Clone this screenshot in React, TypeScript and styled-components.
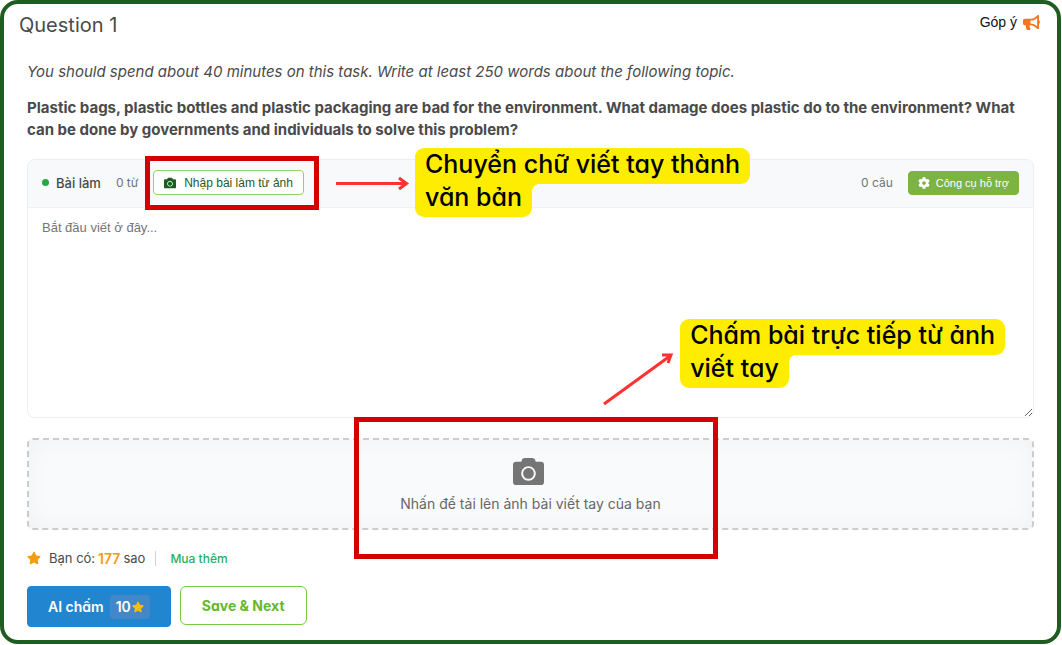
import React from "react";
import styled, { createGlobalStyle } from "styled-components";
import { FaBullhorn, FaCamera, FaCog, FaStar } from "react-icons/fa";

const GlobalStyle = createGlobalStyle`
  *, *::before, *::after { box-sizing: border-box; }
  body { margin: 0; background: #fff; font-family: Inter, "Liberation Sans", sans-serif; color: #4a4a4a; }
  button, textarea { font-family: inherit; margin: 0; }
`;

const Frame = styled.main`
  position: relative;
  margin: 0 1px 1px 0;
  padding: 9px 15px 13px;
  border: 4px solid #1f5c21;
  border-radius: 18px;
`;

const Header = styled.header`
  display: flex;
  justify-content: space-between;
  align-items: flex-start;
  padding-right: 2px;
`;

const Title = styled.h1`
  margin: 0;
  font-size: 20px;
  line-height: 24px;
  font-weight: 400;
`;

const Feedback = styled.button`
  display: flex;
  align-items: center;
  gap: 6px;
  padding: 0;
  border: 0;
  background: none;
  font: 14px/18px "Liberation Sans", Arial, sans-serif;
  color: #111;
  svg { color: #f47421; font-size: 17px; }
`;

const Content = styled.section`
  padding: 23px 8px 0;
`;

const Instruction = styled.p`
  margin: 0 0 14px;
  font-size: 15px;
  line-height: 23px;
  font-style: italic;
`;

const Prompt = styled.p`
  margin: 0 0 18px;
  font-size: 15px;
  line-height: 22px;
  font-weight: 700;
`;

const Editor = styled.div`
  position: relative;
  border: 1px solid #ebedef;
  border-radius: 8px;
`;

const Toolbar = styled.div`
  display: flex;
  align-items: center;
  justify-content: space-between;
  height: 48px;
  padding: 0 14px 2px;
  border-bottom: 1px solid #eff1f3;
  border-radius: 8px 8px 0 0;
  background: #f8f9fb;
`;

const ToolGroup = styled.div`
  display: flex;
  align-items: center;
  gap: 15px;
`;

const EditorLabel = styled.label`
  display: flex;
  align-items: center;
  gap: 7px;
  font-size: 13px;
  font-weight: 500;
  &::before {
    content: "";
    width: 7px;
    height: 7px;
    border-radius: 50%;
    background: #28a745;
  }
`;

const Count = styled.span`
  font-size: 12px;
  color: #6c757d;
`;

const SmallButton = styled.button<{ $solid?: boolean }>`
  display: flex;
  align-items: center;
  gap: ${(p) => (p.$solid ? 6 : 8)}px;
  height: ${(p) => (p.$solid ? 24 : 25)}px;
  padding: 0 ${(p) => (p.$solid ? 9 : 10)}px;
  border: 1px solid ${(p) => (p.$solid ? "#7cb342" : "#94d36b")};
  border-radius: 4px;
  background: ${(p) => (p.$solid ? "#7cb342" : "#fff")};
  color: ${(p) => (p.$solid ? "#fff" : "#1b5e20")};
  font-family: "Liberation Sans", Arial, sans-serif;
  font-size: ${(p) => (p.$solid ? 11 : 12)}px;
  white-space: nowrap;
  svg { font-size: 12px; }
`;

const Highlighted = styled.div`
  position: relative;
`;

const Marker = styled.span`
  position: absolute;
  inset: -14px -15px -15px -8px;
  border: 5px solid #d40000;
  pointer-events: none;
`;

const UploadMarker = styled.span`
  position: absolute;
  top: -23px;
  left: calc(50% - 177px);
  width: 364px;
  height: 142px;
  border: 5px solid #d40000;
  pointer-events: none;
`;

const Answer = styled.textarea`
  display: block;
  width: 100%;
  height: 209px;
  padding: 11px 14px;
  border: 0;
  border-radius: 0 0 8px 8px;
  outline: 0;
  background: #fff;
  resize: vertical;
  font-family: "Liberation Sans", Arial, sans-serif;
  font-size: 13px;
  line-height: 18px;
  &::placeholder { color: #757575; opacity: 1; }
`;

const Upload = styled.button`
  position: relative;
  display: flex;
  flex-direction: column;
  align-items: center;
  justify-content: center;
  gap: 7px;
  width: 100%;
  height: 92px;
  margin-top: 20px;
  padding: 2px 0 0;
  border: 2px dashed #ccc;
  border-radius: 6px;
  background: #f9fafc;
  box-shadow: inset 0 0 24px rgba(0, 0, 0, 0.04);
  color: #666;
  font-size: 14px;
  line-height: 20px;
  svg { margin-right: 4px; font-size: 31px; color: #757575; }
`;

const Balance = styled.div`
  display: flex;
  align-items: center;
  height: 20px;
  margin-top: 18px;
  font-size: 13px;
  svg { margin-right: 8px; font-size: 14px; color: #f39c12; }
`;

const StarTotal = styled.strong`
  margin: 0 3px;
  font-size: 14px;
  font-weight: 600;
  color: #f39c12;
`;

const BuyLink = styled.a`
  margin-left: 10px;
  padding-left: 14px;
  border-left: 1px solid #ccd3da;
  color: #27ae60;
  font-size: 12px;
  font-weight: 500;
  text-decoration: none;
`;

const Actions = styled.div`
  display: flex;
  align-items: flex-start;
  gap: 9px;
  margin-top: 18px;
`;

const ActionButton = styled.button<{ $primary?: boolean }>`
  display: flex;
  align-items: center;
  gap: 6px;
  height: ${(p) => (p.$primary ? 41 : 39)}px;
  padding: 0 ${(p) => (p.$primary ? 20 : 21)}px;
  border: 1px solid ${(p) => (p.$primary ? "#2185d0" : "#7ac943")};
  border-radius: ${(p) => (p.$primary ? 4 : 6)}px;
  background: ${(p) => (p.$primary ? "#2185d0" : "#fff")};
  color: ${(p) => (p.$primary ? "#fff" : "#65b82b")};
  font-size: 14px;
  font-weight: ${(p) => (p.$primary ? 600 : 700)};
  font-feature-settings: "cv11";
  white-space: nowrap;
`;

const Cost = styled.span`
  display: flex;
  align-items: center;
  gap: 1px;
  height: 24px;
  padding: 0 6px;
  border-radius: 4px;
  background: #4288c8;
  svg { font-size: 12px; color: #fbbd08; }
`;

const Callout = styled.aside`
  position: absolute;
  display: flex;
  flex-direction: column;
  align-items: flex-start;
  color: #000;
  font-size: 25px;
  line-height: 33px;
  font-weight: 500;
  font-feature-settings: "cv11";
  white-space: nowrap;
`;

const HandwritingCallout = styled(Callout)`
  top: -12px;
  left: 387px;
`;

const GradingCallout = styled(Callout)`
  top: 159px;
  right: 28px;
`;

const CalloutLine = styled.span<{ $last?: boolean }>`
  position: relative;
  padding: 0 10px 3px;
  margin-top: ${(p) => (p.$last ? -3 : 0)}px;
  border-radius: ${(p) => (p.$last ? "0 0 9px 9px" : "9px 9px 9px 0")};
  background: #ffed00;
  ${(p) =>
    p.$last &&
    `&::after {
      content: "";
      position: absolute;
      top: 3px;
      left: 100%;
      width: 8px;
      height: 8px;
      background: radial-gradient(circle at 100% 100%, transparent 8px, #ffed00 8px);
    }`}
`;

const Arrow = styled.svg`
  position: absolute;
  fill: none;
  stroke: #ff3131;
  stroke-width: 3;
  pointer-events: none;
`;

const RightArrow = styled(Arrow)`
  top: 16px;
  left: 307px;
`;

const RisingArrow = styled(Arrow)`
  top: 190px;
  right: 358px;
`;

export default function App() {
  return (
    <>
      <GlobalStyle />
      <Frame>
        <Header>
          <Title>Question 1</Title>
          <Feedback type="button">
            Góp ý <FaBullhorn aria-hidden />
          </Feedback>
        </Header>
        <Content>
          <Instruction>
            You should spend about 40 minutes on this task. Write at least 250 words about the following topic.
          </Instruction>
          <Prompt>
            Plastic bags, plastic bottles and plastic packaging are bad for the environment. What damage does plastic
            do to the environment? What can be done by governments and individuals to solve this problem?
          </Prompt>
          <Editor>
            <Toolbar>
              <ToolGroup>
                <EditorLabel htmlFor="answer">Bài làm</EditorLabel>
                <Count>0 từ</Count>
                <Highlighted>
                  <SmallButton type="button">
                    <FaCamera aria-hidden /> Nhập bài làm từ ảnh
                  </SmallButton>
                  <Marker />
                </Highlighted>
              </ToolGroup>
              <ToolGroup>
                <Count>0 câu</Count>
                <SmallButton type="button" $solid>
                  <FaCog aria-hidden /> Công cụ hỗ trợ
                </SmallButton>
              </ToolGroup>
            </Toolbar>
            <Answer id="answer" placeholder="Bắt đầu viết ở đây..." />
            <RightArrow width="76" height="16" viewBox="0 0 76 16" aria-hidden>
              <path d="M1 7.5H71M64 2L71.5 7.5L64 13" />
            </RightArrow>
            <HandwritingCallout>
              <CalloutLine>Chuyển chữ viết tay thành</CalloutLine>
              <CalloutLine $last>văn bản</CalloutLine>
            </HandwritingCallout>
            <RisingArrow width="74" height="58" viewBox="0 0 74 58" aria-hidden>
              <path d="M3 54L69 6M61 5H70L67 13" />
            </RisingArrow>
            <GradingCallout>
              <CalloutLine>Chấm bài trực tiếp từ ảnh</CalloutLine>
              <CalloutLine $last>viết tay</CalloutLine>
            </GradingCallout>
          </Editor>
          <Upload type="button">
            <FaCamera aria-hidden />
            Nhấn để tải lên ảnh bài viết tay của bạn
            <UploadMarker />
          </Upload>
          <Balance>
            <FaStar aria-hidden />
            Bạn có: <StarTotal>177</StarTotal> sao
            <BuyLink href="#buy">Mua thêm</BuyLink>
          </Balance>
          <Actions>
            <ActionButton type="button" $primary>
              AI chấm
              <Cost>
                10
                <FaStar aria-hidden />
              </Cost>
            </ActionButton>
            <ActionButton type="button">Save &amp; Next</ActionButton>
          </Actions>
        </Content>
      </Frame>
    </>
  );
}
